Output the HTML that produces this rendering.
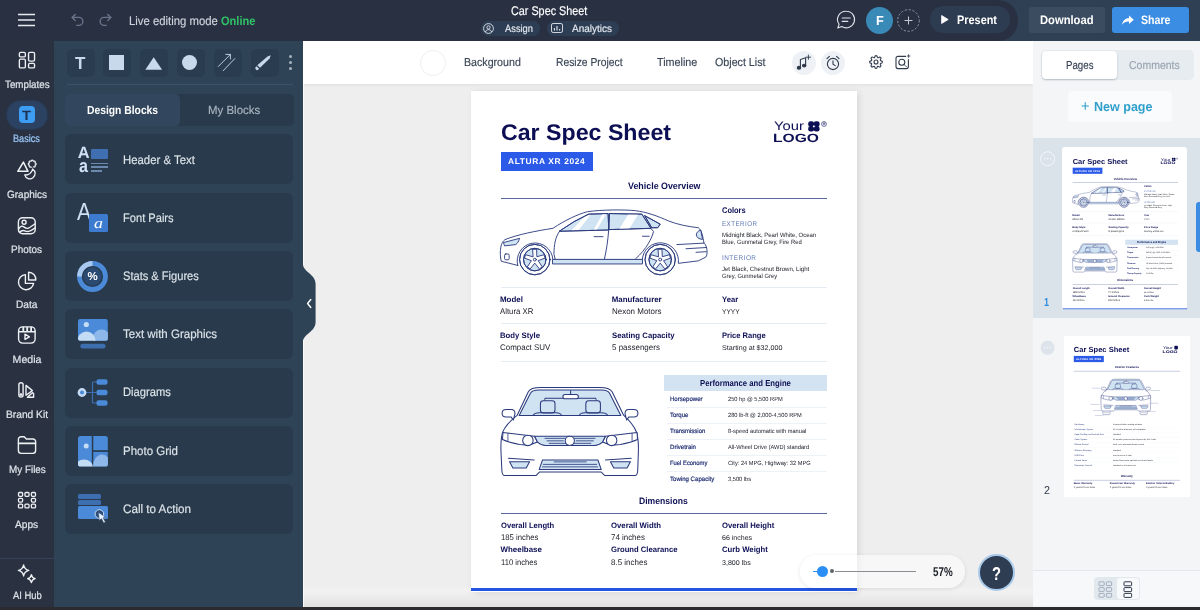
<!DOCTYPE html>
<html><head><meta charset="utf-8"><title>Car Spec Sheet</title>
<style>
*{box-sizing:border-box;margin:0;padding:0}
html,body{width:1200px;height:610px;overflow:hidden;background:#eeeeee;font-family:"Liberation Sans",sans-serif;text-rendering:geometricPrecision}
.a{position:absolute}
.t{position:absolute;white-space:nowrap;transform-origin:0 0}
svg{position:absolute;overflow:visible}
#root{position:absolute;left:0;top:0;width:1200px;height:610px;overflow:hidden;will-change:transform}
</style></head><body>
<div id="root">
<div class="a" style="left:303px;top:41px;width:730px;height:43px;background:#ffffff;box-shadow:0 1px 3px rgba(60,80,100,.10);"></div>
<div class="a" style="left:303px;top:586px;width:730px;height:21px;background:linear-gradient(to bottom,#eeeeee 0%,#f2f2f2 20%,#ececec 50%,#e0e0e0 100%)"></div>
<div class="a" style="left:303px;top:84px;width:1px;height:523px;background:#f9f9f9;"></div>
<div class="a" style="left:0px;top:0px;width:1200px;height:41px;background:#293042;"></div>
<div class="a" style="left:997px;top:0px;width:203px;height:41px;background:#2f4054;"></div>
<div class="a" style="left:977px;top:0px;width:41px;height:41px;background:#293042;border-radius:0 20px 20px 0;"></div>
<div class="a" style="left:0px;top:41px;width:54px;height:569px;background:#2a3141;"></div>
<div class="a" style="left:54px;top:41px;width:249px;height:569px;background:#2f4357;"></div>
<div class="a" style="left:1033px;top:41px;width:167px;height:569px;background:#f4f5f6;"></div>
<svg style="left:18px;top:13px" width="18" height="14"><path d="M0 1.500h17M0 7h17M0 12.500h17" stroke="#e6e9ee" stroke-width="1.600" fill="none"/></svg>
<svg style="left:71px;top:13px" width="14" height="14" viewBox="0 0 14 14" fill="none" stroke="#69748a" stroke-width="1.400" stroke-linecap="round" stroke-linejoin="round"><path d="M1.200 4.400h6.600a4 4 0 0 1 0 8h-2"/><path d="M4.200 1.400l-3 3 3 3"/></svg>
<svg style="left:98px;top:13px" width="14" height="14" viewBox="0 0 14 14" fill="none" stroke="#69748a" stroke-width="1.400" stroke-linecap="round" stroke-linejoin="round"><path d="M12.800 4.400h-6.600a4 4 0 0 0 0 8h2"/><path d="M9.800 1.400l3 3-3 3"/></svg>
<span class="t" style="left:128.60px;top:15.00px;font-size:12.3px;line-height:12.3px;color:#cfd5dd;transform:scaleX(0.9223);-webkit-text-stroke:0.160px #cfd5dd;">Live editing mode</span>
<span class="t" style="left:220.60px;top:15.00px;font-size:12.3px;line-height:12.3px;color:#2fc366;font-weight:700;transform:scaleX(0.8990);">Online</span>
<span class="t" style="left:510.70px;top:5.00px;font-size:12.6px;line-height:12.6px;color:#ffffff;transform:scaleX(0.8581);-webkit-text-stroke:0.160px #ffffff;">Car Spec Sheet</span>
<div class="a" style="left:480.5px;top:21px;width:59.5px;height:14.5px;background:#2d3e54;border-radius:7.2px;"></div>
<div class="a" style="left:547px;top:21px;width:72px;height:14.5px;background:#2d3e54;border-radius:7.2px;"></div>
<svg style="left:482.500px;top:22.500px" width="11" height="11" viewBox="0 0 11 11" fill="none" stroke="#e4e8ee" stroke-width="0.900"><circle cx="5.500" cy="5.500" r="4.900"/><circle cx="5.500" cy="4.400" r="1.600"/><path d="M2.400 9c.6-1.700 1.700-2.300 3.100-2.300s2.500.6 3.100 2.300"/></svg>
<svg style="left:551px;top:23px" width="12" height="10" viewBox="0 0 12 10" fill="none" stroke="#e4e8ee" stroke-width="0.900"><rect x="0.500" y="0.500" width="11" height="9" rx="1.600"/><path d="M3.400 7.400v-2.400M6 7.400v-4.400M8.600 7.400v-1.400" stroke-width="1.100"/></svg>
<span class="t" style="left:505.00px;top:25.00px;font-size:10.4px;line-height:10.4px;color:#e4e8ee;transform:scaleX(0.8978);-webkit-text-stroke:0.160px #e4e8ee;">Assign</span>
<span class="t" style="left:572.00px;top:25.00px;font-size:10.4px;line-height:10.4px;color:#e4e8ee;transform:scaleX(0.9620);-webkit-text-stroke:0.160px #e4e8ee;">Analytics</span>
<svg style="left:836px;top:10px" width="20" height="20" viewBox="0 0 20 20" fill="none" stroke="#dfe4ea" stroke-width="1.100" stroke-linecap="round" stroke-linejoin="round"><path d="M10.400 1.200a8.300 8.300 0 1 1-4.600 15.300l-4 1.500 1.300-3.700a8.300 8.300 0 0 1 7.300-13.100z"/><path d="M6.200 8h8M6.200 11.400h5.600"/></svg>
<div class="a" style="left:866px;top:6.5px;width:27px;height:27px;background:#3a8ab8;border-radius:13.5px;"></div>
<span class="t" style="left:875.60px;top:14.00px;font-size:13px;line-height:13px;color:#ffffff;font-weight:700;transform:scaleX(0.9807);">F</span>
<svg style="left:896.500px;top:8.500px" width="23" height="23" viewBox="0 0 23 23" fill="none" stroke="#9aa4b4" stroke-width="0.900"><circle cx="11.500" cy="11.500" r="10.800" stroke-dasharray="2.200 1.700"/><path d="M11.500 7.500v8M7.500 11.500h8" stroke="#c3cad6" stroke-width="1"/></svg>
<div class="a" style="left:929.5px;top:6.2px;width:80px;height:26.5px;background:#2d3c50;border-radius:13.2px;"></div>
<svg style="left:941px;top:14.800px" width="8" height="9" viewBox="0 0 8 9"><path d="M0.600 0.500l6.600 4-6.600 4z" fill="#fff" stroke="#fff" stroke-width="0.800" stroke-linejoin="round"/></svg>
<span class="t" style="left:957.00px;top:14.00px;font-size:12.2px;line-height:12.2px;color:#ffffff;font-weight:700;transform:scaleX(0.8945);">Present</span>
<div class="a" style="left:1028.7px;top:7px;width:76.3px;height:26px;background:#3c4c60;border-radius:3px;"></div>
<span class="t" style="left:1039.50px;top:14.00px;font-size:12.2px;line-height:12.2px;color:#ffffff;font-weight:700;transform:scaleX(0.9187);">Download</span>
<div class="a" style="left:1112px;top:7px;width:76.7px;height:26px;background:#3b8de4;border-radius:3px;"></div>
<svg style="left:1122px;top:14.500px" width="12" height="11" viewBox="0 0 12 11"><path d="M7 0.400l4.800 4.300-4.800 4.300v-2.500c-3-.2-5 .6-6.800 3.300.3-3.700 2.400-6.300 6.800-6.800z" fill="#fff"/></svg>
<span class="t" style="left:1140.50px;top:14.00px;font-size:12.2px;line-height:12.2px;color:#ffffff;font-weight:700;transform:scaleX(0.8708);">Share</span>
<svg style="left:17.700px;top:51px" width="18.200" height="18.200" viewBox="0 0 20 20" fill="none" stroke="#eef1f4" stroke-width="1.500"><rect x="1.500" y="1.500" width="6.600" height="5" rx="1.400"/><rect x="11.600" y="1.500" width="6.600" height="9.600" rx="1.400"/><rect x="1.500" y="9" width="6.600" height="9.600" rx="1.400"/><rect x="11.600" y="13.600" width="6.600" height="5" rx="1.400"/></svg>
<span class="t" style="left:4.70px;top:80.00px;font-size:10.6px;line-height:10.6px;color:#dfe5ea;transform:scaleX(0.9235);-webkit-text-stroke:0.200px #dfe5ea;">Templates</span>
<div class="a" style="left:7px;top:101px;width:40px;height:28px;border-radius:14px;background:#2b4263;box-shadow:0 0 2px 1px rgba(43,66,99,.6)"></div>
<div class="a" style="left:18.7px;top:106.1px;width:16.4px;height:17px;background:#3d9df2;border-radius:4px;"></div>
<span class="t" style="left:22.30px;top:109.00px;font-size:13.6px;line-height:13.6px;color:#1d3250;font-weight:700;transform:scaleX(1.0827);">T</span>
<span class="t" style="left:13.30px;top:134.00px;font-size:10.6px;line-height:10.6px;color:#9ccbff;transform:scaleX(0.8589);-webkit-text-stroke:0.200px #9ccbff;">Basics</span>
<svg style="left:16px;top:158px" width="22" height="22" viewBox="0 0 22 22" fill="none" stroke="#eef1f4" stroke-width="1.300" stroke-linejoin="round" stroke-linecap="round"><path d="M15.01 3.24Q16.20 1.10 17.39 3.24Q19.74 2.56 19.06 4.91Q21.20 6.10 19.06 7.29Q19.74 9.64 17.39 8.96Q16.20 11.10 15.01 8.96Q12.66 9.64 13.34 7.29Q11.20 6.10 13.34 4.91Q12.66 2.56 15.01 3.24Z"/><path d="M16.600 11A5.300 5.300 0 1 1 8.700 16.900A7 7 0 0 0 16.600 11Z" fill="#2a3141" stroke="#2a3141" stroke-width="3.600"/><path d="M16.600 11A5.300 5.300 0 1 1 8.700 16.900A7 7 0 0 0 16.600 11Z"/><path d="M7.400 4.100L1.800 13.300H12Z" fill="#2a3141" stroke="#2a3141" stroke-width="4.400"/><path d="M7.400 4.100L1.800 13.300H12Z" stroke-width="1.500"/></svg>
<span class="t" style="left:7.00px;top:190.00px;font-size:10.6px;line-height:10.6px;color:#dfe5ea;transform:scaleX(0.9436);-webkit-text-stroke:0.200px #dfe5ea;">Graphics</span>
<svg style="left:16px;top:213px" width="22" height="22" viewBox="0 0 22 22" fill="none" stroke="#eef1f4" stroke-width="1.400" stroke-linejoin="round" stroke-linecap="round"><rect x="2.400" y="4.800" width="16.800" height="16" rx="4.200"/><circle cx="8.100" cy="9.300" r="2"/><path d="M2.700 15.800c1.600-2.600 3.400-3.200 5-2s2.600 2 4.300 1.500 3.400-2 6.800-4.300"/><path d="M3.500 19.300c2-2 3.600-2.300 5.200-1.500s3 1 4.800.4 3.200-1.600 5.500-3.200"/></svg>
<span class="t" style="left:11.00px;top:245.00px;font-size:10.6px;line-height:10.6px;color:#dfe5ea;transform:scaleX(0.9398);-webkit-text-stroke:0.200px #dfe5ea;">Photos</span>
<svg style="left:16px;top:270px" width="22" height="22" viewBox="0 0 22 22" fill="none" stroke="#eef1f4" stroke-width="1.400" stroke-linejoin="round" stroke-linecap="round"><path d="M9.400 4.600a7.600 7.600 0 1 0 8.200 8.800h-8.200z"/><path d="M12.600 2.200v7.800h7.200a7.200 7.200 0 0 0-7.200-7.800z"/></svg>
<span class="t" style="left:16.00px;top:300.00px;font-size:10.6px;line-height:10.6px;color:#dfe5ea;transform:scaleX(0.9602);-webkit-text-stroke:0.200px #dfe5ea;">Data</span>
<svg style="left:16px;top:323px" width="22" height="22" viewBox="0 0 22 22" fill="none" stroke="#eef1f4" stroke-width="1.400" stroke-linejoin="round" stroke-linecap="round"><rect x="2.600" y="3.900" width="16.500" height="16.200" rx="4"/><path d="M2.800 8.800h16.100"/><path d="M7.300 4.600v3.400M11.200 4.600v3.400M15.100 4.600v3.400" stroke-width="1.800"/><path d="M9 11.200v5.200l4.400-2.600z"/></svg>
<span class="t" style="left:12.60px;top:355.00px;font-size:10.6px;line-height:10.6px;color:#dfe5ea;-webkit-text-stroke:0.200px #dfe5ea;">Media</span>
<svg style="left:16px;top:378px" width="22" height="22" viewBox="0 0 22 22" fill="none" stroke="#eef1f4" stroke-width="1.400" stroke-linejoin="round" stroke-linecap="round"><rect x="2.900" y="4.700" width="4.200" height="14.400" rx="2.100"/><circle cx="5" cy="16.600" r="0.700"/><path d="M10 7.400v9.800l6.400-4.600z"/><path d="M11.400 19.300h6.200v-3.800l-1.200-.8z"/></svg>
<span class="t" style="left:6.00px;top:410.00px;font-size:10.6px;line-height:10.6px;color:#dfe5ea;transform:scaleX(0.9638);-webkit-text-stroke:0.200px #dfe5ea;">Brand Kit</span>
<svg style="left:16px;top:434px" width="22" height="22" viewBox="0 0 22 22" fill="none" stroke="#eef1f4" stroke-width="1.400" stroke-linejoin="round" stroke-linecap="round"><path d="M2.400 7v-1.600a2.600 2.600 0 0 1 2.600-2.600h3.200l2.200 2.200h6.600a2.600 2.600 0 0 1 2.600 2.600v9a2.800 2.800 0 0 1-2.800 2.800h-11.600a2.800 2.800 0 0 1-2.800-2.800z"/><path d="M2.600 9.300h16.800" stroke-width="1.700"/></svg>
<span class="t" style="left:8.60px;top:465.00px;font-size:10.6px;line-height:10.6px;color:#dfe5ea;transform:scaleX(0.9331);-webkit-text-stroke:0.200px #dfe5ea;">My Files</span>
<svg style="left:17px;top:491px" width="20" height="18" viewBox="0 0 20 18" fill="none" stroke="#eef1f4" stroke-width="1.300"><rect x="1.5" y="1.5" width="4.100" height="3.800" rx="1"/><rect x="7.95" y="1.5" width="4.100" height="3.800" rx="1"/><rect x="14.4" y="1.5" width="4.100" height="3.800" rx="1"/><rect x="1.5" y="7.3" width="4.100" height="3.800" rx="1"/><rect x="14.4" y="7.3" width="4.100" height="3.800" rx="1"/><rect x="1.5" y="13.1" width="4.100" height="3.800" rx="1"/><rect x="7.95" y="13.1" width="4.100" height="3.800" rx="1"/><rect x="14.4" y="13.1" width="4.100" height="3.800" rx="1"/></svg>
<span class="t" style="left:15.40px;top:520.00px;font-size:10.6px;line-height:10.6px;color:#dfe5ea;transform:scaleX(0.9604);-webkit-text-stroke:0.200px #dfe5ea;">Apps</span>
<div class="a" style="left:0px;top:558px;width:54px;height:1px;background:#36425a;"></div>
<svg style="left:16px;top:563px" width="22" height="22" viewBox="0 0 22 22" fill="none" stroke="#eef1f4" stroke-width="1.300" stroke-linejoin="round"><path d="M7.600 1.800c.6 3.400 1.800 4.800 5.200 5.600-3.400.8-4.600 2.200-5.200 5.600-.6-3.400-1.800-4.800-5.200-5.600 3.400-.8 4.600-2.200 5.200-5.600z"/><path d="M15.400 11.600c.4 2.400 1.300 3.400 3.800 4-2.500.6-3.400 1.600-3.800 4-.4-2.400-1.300-3.400-3.800-4 2.500-.6 3.400-1.600 3.800-4z"/></svg>
<span class="t" style="left:12.60px;top:591.00px;font-size:10.6px;line-height:10.6px;color:#dfe5ea;transform:scaleX(0.8891);-webkit-text-stroke:0.200px #dfe5ea;">AI Hub</span>
<div class="a" style="left:66.5px;top:48.5px;width:28px;height:28px;background:#2a3d50;border-radius:5px;"></div>
<div class="a" style="left:103.4px;top:48.5px;width:28px;height:28px;background:#2a3d50;border-radius:5px;"></div>
<div class="a" style="left:140.3px;top:48.5px;width:28px;height:28px;background:#2a3d50;border-radius:5px;"></div>
<div class="a" style="left:177.2px;top:48.5px;width:28px;height:28px;background:#2a3d50;border-radius:5px;"></div>
<div class="a" style="left:214.1px;top:48.5px;width:28px;height:28px;background:#2a3d50;border-radius:5px;"></div>
<div class="a" style="left:251px;top:48.5px;width:28px;height:28px;background:#2a3d50;border-radius:5px;"></div>
<span class="t" style="left:74.80px;top:55.00px;font-size:17.5px;line-height:17.5px;color:#c9d9ec;font-weight:700;transform:scaleX(0.9717);">T</span>
<div class="a" style="left:109.2px;top:55.2px;width:15.2px;height:14.6px;background:#c9d9ec;"></div>
<svg style="left:144.800px;top:57px" width="17.400" height="13"><path d="M8.700 0.300L17.100 12.800H0.300z" fill="#c9d9ec"/></svg>
<div class="a" style="left:182.1px;top:54.8px;width:15.4px;height:15.4px;background:#c9d9ec;border-radius:8px;"></div>
<svg style="left:214px;top:49px" width="28" height="28" viewBox="0 0 28 28" fill="none" stroke="#c9d9ec" stroke-width="0.900" stroke-linecap="round" stroke-linejoin="round"><path d="M4.300 17.500L16.400 5.400M11.800 5.400h4.600v4.600M9.200 21.700L20.800 9.600"/></svg>
<svg style="left:250px;top:49px" width="28" height="28" viewBox="0 0 28 28"><path d="M7.300 16.250L17.500 7.500L20.800 6.250L19.600 9.600L10 18.750Z" fill="#c9d9ec"/><path d="M6.600 17.300l2.400 2.500-.8.900a1.750 1.750 0 0 1-2.500-2.400z" fill="#c9d9ec"/></svg>
<div class="a" style="left:289.1px;top:54.8px;width:3.4px;height:3.4px;background:#a8b2be;border-radius:2px;"></div>
<div class="a" style="left:289.1px;top:60.75px;width:3.4px;height:3.4px;background:#a8b2be;border-radius:2px;"></div>
<div class="a" style="left:289.1px;top:66.7px;width:3.4px;height:3.4px;background:#a8b2be;border-radius:2px;"></div>
<div class="a" style="left:67px;top:84px;width:225.5px;height:1px;background:#3d5268;"></div>
<div class="a" style="left:64.8px;top:93.8px;width:228.9px;height:31.8px;background:#283a4b;border-radius:5px;"></div>
<div class="a" style="left:64.8px;top:93.8px;width:114.9px;height:31.8px;background:#32475d;border-radius:5px;"></div>
<span class="t" style="left:86.50px;top:105.00px;font-size:11.8px;line-height:11.8px;color:#ffffff;font-weight:700;transform:scaleX(0.8746);">Design Blocks</span>
<span class="t" style="left:208.30px;top:105.00px;font-size:11.8px;line-height:11.8px;color:#aab5c0;transform:scaleX(0.9712);-webkit-text-stroke:0.160px #aab5c0;">My Blocks</span>
<div class="a" style="left:65px;top:134px;width:227.8px;height:50px;background:#283a4b;border-radius:6px;"></div>
<span class="t" style="left:123.00px;top:154.00px;font-size:12.3px;line-height:12.3px;color:#dde4ea;transform:scaleX(0.9240);-webkit-text-stroke:0.160px #dde4ea;">Header &amp; Text</span>
<div class="a" style="left:65px;top:192.5px;width:227.8px;height:50px;background:#283a4b;border-radius:6px;"></div>
<span class="t" style="left:123.00px;top:212.00px;font-size:12.3px;line-height:12.3px;color:#dde4ea;transform:scaleX(0.9028);-webkit-text-stroke:0.160px #dde4ea;">Font Pairs</span>
<div class="a" style="left:65px;top:251px;width:227.8px;height:50px;background:#283a4b;border-radius:6px;"></div>
<span class="t" style="left:123.00px;top:270.00px;font-size:12.3px;line-height:12.3px;color:#dde4ea;transform:scaleX(0.9017);-webkit-text-stroke:0.160px #dde4ea;">Stats &amp; Figures</span>
<div class="a" style="left:65px;top:309.3px;width:227.8px;height:50px;background:#283a4b;border-radius:6px;"></div>
<span class="t" style="left:123.00px;top:328.00px;font-size:12.3px;line-height:12.3px;color:#dde4ea;transform:scaleX(0.9356);-webkit-text-stroke:0.160px #dde4ea;">Text with Graphics</span>
<div class="a" style="left:65px;top:367.8px;width:227.8px;height:50px;background:#283a4b;border-radius:6px;"></div>
<span class="t" style="left:123.00px;top:386.00px;font-size:12.3px;line-height:12.3px;color:#dde4ea;transform:scaleX(0.9083);-webkit-text-stroke:0.160px #dde4ea;">Diagrams</span>
<div class="a" style="left:65px;top:426px;width:227.8px;height:50px;background:#283a4b;border-radius:6px;"></div>
<span class="t" style="left:123.00px;top:445.00px;font-size:12.3px;line-height:12.3px;color:#dde4ea;transform:scaleX(0.9354);-webkit-text-stroke:0.160px #dde4ea;">Photo Grid</span>
<div class="a" style="left:65px;top:484.4px;width:227.8px;height:50px;background:#283a4b;border-radius:6px;"></div>
<span class="t" style="left:123.00px;top:503.00px;font-size:12.3px;line-height:12.3px;color:#dde4ea;transform:scaleX(0.9473);-webkit-text-stroke:0.160px #dde4ea;">Call to Action</span>
<span class="t" style="left:77.70px;top:145.00px;font-size:16.4px;line-height:16.4px;color:#cfe0f5;font-weight:700;">A</span>
<span class="t" style="left:78.60px;top:157.00px;font-size:18.5px;line-height:18.5px;color:#cfe0f5;font-weight:700;transform:scaleX(0.8741);">a</span>
<div class="a" style="left:91px;top:149px;width:16.6px;height:10px;background:#3f6fb0;border-radius:1px;"></div>
<div class="a" style="left:91px;top:162.8px;width:16.6px;height:1.5px;background:#6b88ad;"></div>
<div class="a" style="left:91px;top:166.4px;width:16.6px;height:1.5px;background:#6b88ad;"></div>
<div class="a" style="left:91px;top:170px;width:11.3px;height:1.5px;background:#6b88ad;"></div>
<span class="t" style="left:77.30px;top:201.00px;font-size:24.6px;line-height:24.6px;color:#cfe0f5;transform:scaleX(0.8655);">A</span>
<div class="a" style="left:89px;top:214.2px;width:18.6px;height:18.2px;background:#3d7bd0;border-radius:1.5px;"></div>
<span class="t" style="left:93.50px;top:217.00px;font-size:15px;line-height:15px;color:#ffffff;transform:scaleX(1.1985);font-family:'Liberation Serif',serif;font-style:italic;">a</span>
<svg style="left:77px;top:260.500px" width="31" height="31" viewBox="-15.500 -15.500 31 31"><circle r="13" fill="none" stroke="#4a8ad8" stroke-width="4.800"/><path d="M-13 0A13 13 0 0 1 0 -13" fill="none" stroke="#a8c8f0" stroke-width="4.800"/><circle r="9.300" fill="#2b4a72"/></svg>
<span class="t" style="left:87.40px;top:272.00px;font-size:11.5px;line-height:11.5px;color:#ffffff;font-weight:700;">%</span>
<svg style="left:77.700px;top:319.200px" width="30" height="30" viewBox="0 0 30 30"><defs><clipPath id="c4"><rect width="29.900" height="21.700" rx="2.200"/></clipPath></defs><g clip-path="url(#c4)"><rect width="29.900" height="21.700" fill="#4a8ad8"/><circle cx="23.500" cy="19" r="8.500" fill="#8fb8ea"/><circle cx="8.500" cy="21.500" r="9" fill="#c5dcf5"/><circle cx="8.300" cy="5.500" r="2.600" fill="#c5dcf5"/></g><rect x="2.300" y="24.800" width="25.300" height="4.800" rx="2.400" fill="#3d6eb0"/></svg>
<svg style="left:77px;top:378px" width="32" height="30" viewBox="0 0 32 30"><path d="M5 14.500h14.400M15.500 4h4M15.500 25h4M15.500 4v21" stroke="#3d6eb0" stroke-width="1.200" fill="none"/><rect x="19.400" y="1.200" width="11.200" height="5.600" rx="2.200" fill="#4a8ad8"/><rect x="19.400" y="11.700" width="11.200" height="5.600" rx="2.200" fill="#4a8ad8"/><rect x="19.400" y="22.200" width="11.200" height="5.600" rx="2.200" fill="#4a8ad8"/><circle cx="5" cy="14.500" r="4.400" fill="#c5dcf5"/><circle cx="5" cy="14.500" r="2" fill="#4a8ad8"/></svg>
<svg style="left:77.700px;top:435.800px" width="30" height="31" viewBox="0 0 30 31"><defs><clipPath id="c6"><rect width="29.900" height="30.500" rx="2.600"/></clipPath></defs><g clip-path="url(#c6)"><rect width="13.800" height="30.500" fill="#4a8ad8"/><rect x="15.300" width="14.600" height="14.200" fill="#4a8ad8"/><rect x="15.300" y="15.900" width="14.600" height="14.600" fill="#4a8ad8"/><ellipse cx="6" cy="31" rx="9" ry="7.500" fill="#c5dcf5"/><circle cx="8.200" cy="10" r="2.500" fill="#c5dcf5"/><ellipse cx="24" cy="30.500" rx="9" ry="12" fill="#8fb8ea"/></g></svg>
<div class="a" style="left:77.7px;top:494px;width:23.6px;height:4.5px;background:#3d6eb0;border-radius:1.5px;"></div>
<div class="a" style="left:77.7px;top:500.2px;width:23.6px;height:4.4px;background:#3d6eb0;border-radius:1.5px;"></div>
<div class="a" style="left:77.7px;top:506px;width:29.9px;height:12.7px;background:#4a8ad8;border-radius:1.5px;"></div>
<svg style="left:92px;top:507px" width="18" height="18" viewBox="0 0 18 18"><circle cx="7.400" cy="7" r="4.300" fill="#2e4c78" stroke="#c5dcf5" stroke-width="1"/><path d="M6.400 5.400l1 8.200 2-2 2.400 4.400 1.600-.9-2.400-4.300 2.700-.5z" fill="#eaf2fb" stroke="#2e4c78" stroke-width="0.500"/></svg>
<svg style="left:303px;top:264px" width="14" height="78" viewBox="0 0 14 78"><path d="M0 0c0 8 12.600 10 12.600 20v38c0 10-12.600 12-12.600 20z" fill="#2f4357"/><path d="M7.800 35.500l-3.200 4 3.200 4" fill="none" stroke="#fff" stroke-width="1.400" stroke-linecap="round" stroke-linejoin="round"/></svg>
<div class="a" style="left:420px;top:49.500px;width:26px;height:26px;border-radius:13px;border:1px solid #eceff3;background:#fff"></div>
<span class="t" style="left:463.70px;top:57.00px;font-size:11.6px;line-height:11.6px;color:#3a4556;transform:scaleX(0.9180);-webkit-text-stroke:0.160px #3a4556;">Background</span>
<span class="t" style="left:555.50px;top:57.00px;font-size:11.6px;line-height:11.6px;color:#3a4556;transform:scaleX(0.8896);-webkit-text-stroke:0.160px #3a4556;">Resize Project</span>
<span class="t" style="left:656.70px;top:57.00px;font-size:11.6px;line-height:11.6px;color:#3a4556;transform:scaleX(0.9288);-webkit-text-stroke:0.160px #3a4556;">Timeline</span>
<span class="t" style="left:714.50px;top:57.00px;font-size:11.6px;line-height:11.6px;color:#3a4556;transform:scaleX(0.9218);-webkit-text-stroke:0.160px #3a4556;">Object List</span>
<div class="a" style="left:791.7px;top:50.5px;width:24px;height:24px;background:#eef1f5;border-radius:12px;"></div>
<div class="a" style="left:820.5px;top:50.5px;width:24px;height:24px;background:#eef1f5;border-radius:12px;"></div>
<svg style="left:796px;top:54px" width="16" height="17" viewBox="0 0 16 17" fill="none" stroke="#2f3a4b" stroke-width="1.100" stroke-linecap="round"><path d="M4.400 13.600v-8l5.200-1.800v7.600"/><ellipse cx="3" cy="13.800" rx="1.700" ry="1.400" fill="#2f3a4b"/><ellipse cx="8.200" cy="11.600" rx="1.700" ry="1.400" fill="#2f3a4b"/><path d="M12.400 1v4.400M10.200 3.200h4.400" stroke-width="0.900"/></svg>
<svg style="left:824.500px;top:54.500px" width="16" height="16" viewBox="0 0 16 16" fill="none" stroke="#2f3a4b" stroke-width="1.100" stroke-linecap="round"><circle cx="8" cy="9" r="5.600"/><path d="M8 5.800v3.400l2.200 1.400M2 3.600l2.400-2.200M14 3.600l-2.400-2.200"/></svg>
<svg style="left:868.500px;top:55px" width="14" height="14" viewBox="0 0 24 24" fill="none" stroke="#2f3a4b" stroke-width="1.900" stroke-linejoin="round"><circle cx="12" cy="12" r="3.400"/><path d="M19.400 15a1.700 1.700 0 0 0 .3 1.800l.1.100a2 2 0 1 1-2.900 2.900l-.1-.1a1.700 1.700 0 0 0-1.800-.3 1.700 1.700 0 0 0-1 1.500V21a2 2 0 1 1-4 0v-.1a1.700 1.700 0 0 0-1.100-1.500 1.700 1.700 0 0 0-1.800.3l-.1.100a2 2 0 1 1-2.900-2.900l.1-.1a1.700 1.700 0 0 0 .3-1.800 1.700 1.700 0 0 0-1.500-1H3a2 2 0 1 1 0-4h.1a1.700 1.700 0 0 0 1.500-1.100 1.700 1.700 0 0 0-.3-1.800l-.1-.1a2 2 0 1 1 2.900-2.900l.1.100a1.700 1.700 0 0 0 1.800.3h.1a1.700 1.700 0 0 0 1-1.500V3a2 2 0 1 1 4 0v.1a1.700 1.700 0 0 0 1 1.500 1.700 1.700 0 0 0 1.800-.3l.1-.1a2 2 0 1 1 2.900 2.900l-.1.100a1.700 1.700 0 0 0-.3 1.800v.1a1.700 1.700 0 0 0 1.500 1H21a2 2 0 1 1 0 4h-.1a1.700 1.700 0 0 0-1.500 1z"/></svg>
<svg style="left:894.500px;top:54px" width="16" height="16" viewBox="0 0 16 16" fill="none" stroke="#2f3a4b" stroke-width="1.100" stroke-linecap="round"><path d="M10.600 2.400H3a2 2 0 0 0-2 2v8.200a2 2 0 0 0 2 2h8.400a2 2 0 0 0 2-2V5.600"/><circle cx="6.800" cy="8.200" r="3"/><path d="M9 10.400l2.600 2.600M13.600 0.600v2.800M12.200 2h2.800" stroke-width="0.800"/></svg>
<div class="a" style="left:1041px;top:50px;width:152.7px;height:30px;background:#e6ecf0;border-radius:5px;"></div>
<div class="a" style="left:1041.700px;top:50.700px;width:75.300px;height:28.500px;border-radius:4px;background:#fff;box-shadow:0 1px 2px rgba(120,130,145,.45)"></div>
<span class="t" style="left:1065.50px;top:61.00px;font-size:11.5px;line-height:11.5px;color:#3a4556;transform:scaleX(0.8433);-webkit-text-stroke:0.160px #3a4556;">Pages</span>
<span class="t" style="left:1128.70px;top:61.00px;font-size:11.5px;line-height:11.5px;color:#9ba5b0;transform:scaleX(0.9135);-webkit-text-stroke:0.160px #9ba5b0;">Comments</span>
<div class="a" style="left:1067.5px;top:91px;width:104px;height:31.3px;background:#fafbfc;border-radius:4px;"></div>
<span class="t" style="left:1081.00px;top:99.00px;font-size:15px;line-height:15px;color:#2f9fcb;transform:scaleX(0.9697);">+</span>
<span class="t" style="left:1093.50px;top:100.00px;font-size:13px;line-height:13px;color:#2f9fcb;font-weight:700;transform:scaleX(0.9640);">New page</span>
<div class="a" style="left:1033.4px;top:137.7px;width:166.6px;height:180.6px;background:#dbe3ea;"></div>
<div class="a" style="left:1196px;top:202px;width:4px;height:50px;background:#3b8de4;border-radius:3px 0 0 3px;"></div>
<svg style="left:1040px;top:151px" width="16" height="16" viewBox="0 0 16 16"><circle cx="7.600" cy="7.700" r="7" fill="none" stroke="#f4f7fa" stroke-width="1"/><circle cx="4.600" cy="7.700" r="0.800" fill="#f4f7fa"/><circle cx="7.600" cy="7.700" r="0.800" fill="#f4f7fa"/><circle cx="10.600" cy="7.700" r="0.800" fill="#f4f7fa"/></svg>
<svg style="left:1040px;top:340px" width="16" height="16" viewBox="0 0 16 16"><circle cx="7.600" cy="7.700" r="7" fill="#dde3ea"/><circle cx="4.600" cy="7.700" r="0.800" fill="#f4f7fa"/><circle cx="7.600" cy="7.700" r="0.800" fill="#f4f7fa"/><circle cx="10.600" cy="7.700" r="0.800" fill="#f4f7fa"/></svg>
<div class="a" style="left:1062.3px;top:147.2px;width:124.6px;height:161.5px;background:#ffffff;border-radius:3px;"></div>
<div class="a" style="left:1063.6px;top:335.7px;width:126px;height:161.3px;background:#ffffff;"></div>
<span class="t" style="left:1043.50px;top:298.00px;font-size:11.5px;line-height:11.5px;color:#2f8be0;font-weight:700;transform:scaleX(0.7805);">1</span>
<span class="t" style="left:1043.50px;top:486.00px;font-size:11.5px;line-height:11.5px;color:#333b4a;transform:scaleX(0.9366);">2</span>
<div class="a" style="left:1033.4px;top:570px;width:166.6px;height:35px;background:#f7f8f9;border-top:1px solid #dfe7ef;"></div>
<div class="a" style="left:1094px;top:577px;width:46px;height:23px;background:#e1e8ee;border-radius:4px;"></div>
<div class="a" style="left:1117px;top:578px;width:22px;height:21px;background:#f7f9fb;border-radius:3px;"></div>
<svg style="left:1098px;top:580.500px" width="15" height="17" viewBox="0 0 15 17" fill="none" stroke="#9aa8b8" stroke-width="0.900"><rect x="1" y="0.8" width="5.200" height="3.800" rx="0.600"/><rect x="8.4" y="0.8" width="5.200" height="3.800" rx="0.600"/><rect x="1" y="6.6" width="5.200" height="3.800" rx="0.600"/><rect x="8.4" y="6.6" width="5.200" height="3.800" rx="0.600"/><rect x="1" y="12.4" width="5.200" height="3.800" rx="0.600"/><rect x="8.4" y="12.4" width="5.200" height="3.800" rx="0.600"/></svg>
<svg style="left:1123px;top:580.500px" width="10" height="17" viewBox="0 0 10 17" fill="none" stroke="#2f3a4b" stroke-width="1"><rect x="1" y="0.8" width="7.600" height="4" rx="0.700"/><rect x="1" y="6.6" width="7.600" height="4" rx="0.700"/><rect x="1" y="12.4" width="7.600" height="4" rx="0.700"/></svg>
<div class="a" style="left:471px;top:91px;width:386.300px;height:500.500px;background:#fff;text-rendering:geometricPrecision;box-shadow:1.500px 1px 7px rgba(0,0,0,.11);"><span class="t" style="left:29.70px;top:30.00px;font-size:22.7px;line-height:22.7px;color:#0d0f55;font-weight:700;transform:scaleX(1.0213);">Car Spec Sheet</span>
<div class="a" style="left:29.5px;top:60.5px;width:92.5px;height:19.2px;background:#2b5ae8;"></div>
<span class="t" style="left:37.20px;top:66.00px;font-size:8.3px;line-height:8.3px;color:#ffffff;font-weight:700;letter-spacing:0.6px;transform:scaleX(1.0160);">ALTURA XR 2024</span>
<span class="t" style="left:302.80px;top:29.00px;font-size:12.4px;line-height:12.4px;color:#0d0f55;transform:scaleX(1.1898);">Your</span>
<span class="t" style="left:302.30px;top:41.00px;font-size:12px;line-height:12px;color:#0d0f55;font-weight:700;transform:scaleX(1.3015);">LOGO</span>
<svg style="left:337.2px;top:30px" width="12" height="11" viewBox="0 0 12 11"><g fill="#0d0f55"><rect x="0.200" y="0.200" width="5.900" height="5.500" rx="2.300"/><rect x="5.700" y="0.200" width="5.900" height="5.500" rx="2.300"/><rect x="0.200" y="5.100" width="5.900" height="5.500" rx="2.300"/><rect x="5.700" y="5.100" width="5.900" height="5.500" rx="2.300"/></g><rect x="5.100" y="4.600" width="1.600" height="1.600" rx="0.400" fill="#fff"/></svg>
<svg style="left:350px;top:29.6px" width="6" height="6" viewBox="0 0 6 6"><circle cx="3" cy="3" r="2.400" fill="none" stroke="#0d0f55" stroke-width="0.600"/></svg>
<span class="t" style="left:351.80px;top:32.00px;font-size:3.4px;line-height:3.4px;color:#0d0f55;font-weight:700;transform:scaleX(0.9783);">R</span>
<span class="t" style="left:156.50px;top:91.00px;font-size:9.3px;line-height:9.3px;color:#0d0f55;font-weight:700;transform:scaleX(0.9541);">Vehicle Overview</span>
<div class="a" style="left:29.5px;top:106.9px;width:326.5px;height:0.9px;background:#5c69a3;"></div>
<span class="t" style="left:251.30px;top:115.00px;font-size:8.3px;line-height:8.3px;color:#0d0f55;font-weight:700;transform:scaleX(0.9018);">Colors</span>
<span class="t" style="left:251.30px;top:131.00px;font-size:6.8px;line-height:6.8px;color:#5f79b5;letter-spacing:0.5px;transform:scaleX(0.9176);">EXTERIOR</span>
<span class="t" style="left:251.30px;top:142.00px;font-size:6.2px;line-height:6.2px;color:#20222b;transform:scaleX(0.9679);">Midnight Black, Pearl White, Ocean</span>
<span class="t" style="left:251.30px;top:149.00px;font-size:6.2px;line-height:6.2px;color:#20222b;transform:scaleX(0.9434);">Blue, Gunmetal Grey, Fire Red</span>
<span class="t" style="left:251.30px;top:165.00px;font-size:6.8px;line-height:6.8px;color:#5f79b5;letter-spacing:0.5px;transform:scaleX(0.9449);">INTERIOR</span>
<span class="t" style="left:251.30px;top:176.00px;font-size:6.2px;line-height:6.2px;color:#20222b;transform:scaleX(0.9752);">Jet Black, Chestnut Brown, Light</span>
<span class="t" style="left:251.30px;top:183.00px;font-size:6.2px;line-height:6.2px;color:#20222b;transform:scaleX(0.9461);">Grey, Gunmetal Grey</span>
<div class="a" style="left:29.5px;top:196px;width:326.5px;height:0.9px;background:#e1ecf6;"></div>
<div class="a" style="left:29.5px;top:232.2px;width:326.5px;height:0.9px;background:#e1ecf6;"></div>
<div class="a" style="left:29.5px;top:269.6px;width:326.5px;height:0.9px;background:#e1ecf6;"></div>
<span class="t" style="left:29.40px;top:205.00px;font-size:7.9px;line-height:7.9px;color:#0d0f55;font-weight:700;transform:scaleX(1.0045);">Model</span>
<span class="t" style="left:29.40px;top:217.00px;font-size:8.2px;line-height:8.2px;color:#20222b;transform:scaleX(0.9502);">Altura XR</span>
<span class="t" style="left:140.70px;top:205.00px;font-size:7.9px;line-height:7.9px;color:#0d0f55;font-weight:700;">Manufacturer</span>
<span class="t" style="left:140.70px;top:217.00px;font-size:8.2px;line-height:8.2px;color:#20222b;transform:scaleX(0.9731);">Nexon Motors</span>
<span class="t" style="left:251.30px;top:205.00px;font-size:7.9px;line-height:7.9px;color:#0d0f55;font-weight:700;transform:scaleX(0.9708);">Year</span>
<span class="t" style="left:251.30px;top:219.00px;font-size:6.8px;line-height:6.8px;color:#20222b;transform:scaleX(0.9702);">YYYY</span>
<span class="t" style="left:29.40px;top:241.00px;font-size:7.9px;line-height:7.9px;color:#0d0f55;font-weight:700;transform:scaleX(0.9808);">Body Style</span>
<span class="t" style="left:29.40px;top:253.00px;font-size:8.2px;line-height:8.2px;color:#20222b;transform:scaleX(0.9716);">Compact SUV</span>
<span class="t" style="left:140.70px;top:241.00px;font-size:7.9px;line-height:7.9px;color:#0d0f55;font-weight:700;transform:scaleX(0.9859);">Seating Capacity</span>
<span class="t" style="left:140.70px;top:253.00px;font-size:8.2px;line-height:8.2px;color:#20222b;transform:scaleX(0.9741);">5 passengers</span>
<span class="t" style="left:251.30px;top:241.00px;font-size:7.9px;line-height:7.9px;color:#0d0f55;font-weight:700;transform:scaleX(0.9578);">Price Range</span>
<span class="t" style="left:251.30px;top:255.00px;font-size:6.9px;line-height:6.9px;color:#20222b;transform:scaleX(1.0389);">Starting at $32,000</span>
<div class="a" style="left:192.8px;top:284.3px;width:163.2px;height:15.3px;background:#d3e3f1;"></div>
<span class="t" style="left:228.80px;top:288.00px;font-size:8.7px;line-height:8.7px;color:#0d0f55;font-weight:700;transform:scaleX(0.8880);">Performance and Engine</span>
<span class="t" style="left:198.70px;top:306.00px;font-size:6.3px;line-height:6.3px;color:#1a2870;transform:scaleX(0.9572);-webkit-text-stroke:0.180px #1a2870;">Horsepower</span>
<span class="t" style="left:256.70px;top:306.00px;font-size:6px;line-height:6px;color:#20222b;transform:scaleX(0.9464);">250 hp @ 5,500 RPM</span>
<div class="a" style="left:196px;top:315.9px;width:160px;height:0.8px;background:#edf2f7;"></div>
<span class="t" style="left:198.70px;top:322.00px;font-size:6.3px;line-height:6.3px;color:#1a2870;transform:scaleX(0.9499);-webkit-text-stroke:0.180px #1a2870;">Torque</span>
<span class="t" style="left:256.70px;top:322.00px;font-size:6px;line-height:6px;color:#20222b;transform:scaleX(0.9445);">280 lb-ft @ 2,000-4,500 RPM</span>
<div class="a" style="left:196px;top:331.8px;width:160px;height:0.8px;background:#edf2f7;"></div>
<span class="t" style="left:198.70px;top:338.00px;font-size:6.3px;line-height:6.3px;color:#1a2870;transform:scaleX(0.9484);-webkit-text-stroke:0.180px #1a2870;">Transmission</span>
<span class="t" style="left:256.70px;top:338.00px;font-size:6px;line-height:6px;color:#20222b;transform:scaleX(0.9428);">8-speed automatic with manual</span>
<div class="a" style="left:196px;top:347.7px;width:160px;height:0.8px;background:#edf2f7;"></div>
<span class="t" style="left:198.70px;top:354.00px;font-size:6.3px;line-height:6.3px;color:#1a2870;transform:scaleX(0.9646);-webkit-text-stroke:0.180px #1a2870;">Drivetrain</span>
<span class="t" style="left:256.70px;top:354.00px;font-size:6px;line-height:6px;color:#20222b;transform:scaleX(0.9453);">All-Wheel Drive (AWD) standard</span>
<div class="a" style="left:196px;top:363.6px;width:160px;height:0.8px;background:#edf2f7;"></div>
<span class="t" style="left:198.70px;top:370.00px;font-size:6.3px;line-height:6.3px;color:#1a2870;transform:scaleX(0.9292);-webkit-text-stroke:0.180px #1a2870;">Fuel Economy</span>
<span class="t" style="left:256.70px;top:370.00px;font-size:6px;line-height:6px;color:#20222b;transform:scaleX(0.9454);">City: 24 MPG, Highway: 32 MPG</span>
<div class="a" style="left:196px;top:379.5px;width:160px;height:0.8px;background:#edf2f7;"></div>
<span class="t" style="left:198.70px;top:386.00px;font-size:6.3px;line-height:6.3px;color:#1a2870;transform:scaleX(0.9660);-webkit-text-stroke:0.180px #1a2870;">Towing Capacity</span>
<span class="t" style="left:256.70px;top:386.00px;font-size:6px;line-height:6px;color:#20222b;transform:scaleX(0.9483);">3,500 lbs</span>
<span class="t" style="left:168.30px;top:406.00px;font-size:9.3px;line-height:9.3px;color:#0d0f55;font-weight:700;transform:scaleX(0.9240);">Dimensions</span>
<div class="a" style="left:29.5px;top:421.8px;width:326.5px;height:0.9px;background:#5c69a3;"></div>
<span class="t" style="left:29.60px;top:431.00px;font-size:7.9px;line-height:7.9px;color:#0d0f55;font-weight:700;transform:scaleX(0.9629);">Overall Length</span>
<span class="t" style="left:29.60px;top:443.00px;font-size:8.2px;line-height:8.2px;color:#20222b;transform:scaleX(0.9442);">185 inches</span>
<span class="t" style="left:29.60px;top:455.00px;font-size:7.9px;line-height:7.9px;color:#0d0f55;font-weight:700;">Wheelbase</span>
<span class="t" style="left:29.60px;top:468.00px;font-size:8.2px;line-height:8.2px;color:#20222b;transform:scaleX(0.9333);">110 inches</span>
<span class="t" style="left:140.40px;top:431.00px;font-size:7.9px;line-height:7.9px;color:#0d0f55;font-weight:700;transform:scaleX(0.9843);">Overall Width</span>
<span class="t" style="left:140.40px;top:443.00px;font-size:8.2px;line-height:8.2px;color:#20222b;transform:scaleX(0.9668);">74 inches</span>
<span class="t" style="left:140.40px;top:455.00px;font-size:7.9px;line-height:7.9px;color:#0d0f55;font-weight:700;transform:scaleX(0.9721);">Ground Clearance</span>
<span class="t" style="left:140.40px;top:468.00px;font-size:8.2px;line-height:8.2px;color:#20222b;transform:scaleX(0.9751);">8.5 inches</span>
<span class="t" style="left:251.20px;top:431.00px;font-size:7.9px;line-height:7.9px;color:#0d0f55;font-weight:700;transform:scaleX(0.9776);">Overall Height</span>
<span class="t" style="left:251.20px;top:445.00px;font-size:6.9px;line-height:6.9px;color:#20222b;transform:scaleX(1.0203);">66 inches</span>
<span class="t" style="left:251.20px;top:455.00px;font-size:7.9px;line-height:7.9px;color:#0d0f55;font-weight:700;transform:scaleX(0.9794);">Curb Weight</span>
<span class="t" style="left:251.20px;top:470.00px;font-size:6.9px;line-height:6.9px;color:#20222b;transform:scaleX(1.0297);">3,800 lbs</span>
<div class="a" style="left:0.2px;top:496.7px;width:386px;height:3.8px;background:#2454e0;"></div>
<svg style="left:9px;top:104px" width="250" height="100" viewBox="0 0 1200 480" fill="none" stroke="#2b3a7d" stroke-width="4.400" stroke-linejoin="round" stroke-linecap="round"><path d="M181 338L102 318C97 300 96 270 100 250C103 232 110 222 120 214C180 190 270 172 350 160C410 120 470 92 516 80C590 70 690 70 745 75C800 82 850 100 906 125C950 142 1000 152 1048 157C1064 168 1070 200 1075 231C1092 245 1094 285 1084 298L1048 316L952 328A87 87 0 1 0 779 310L350 310A86 86 0 1 0 181 338Z" fill="#fff"/><path d="M382 173Q450 124 521 92L615 89L618 166Z" fill="#cfe3f3"/><path d="M623 89L777 92L821 160L620 166Z" fill="#cfe3f3"/><path d="M792 100L865 140L853 157L826 157Z" fill="#cfe3f3"/><g stroke="none" fill="#fff"><path d="M500 106L532 94L474 168L440 169Z"/><path d="M588 91L606 90L560 167L546 167Z"/><path d="M712 92L760 92L716 163L668 164Z"/></g><path d="M382 173Q450 124 521 92L615 89L618 166Z"/><path d="M623 89L777 92L821 160L620 166Z"/><path d="M792 100L865 140L853 157L826 157Z"/><path d="M382 174C362 200 355 240 355 285L361 308"/><path d="M618 166C614 220 606 270 597 308"/><path d="M821 162L833 175C826 205 800 260 747 306"/><path d="M548 200h42M780 198h32"/><rect x="350" y="309" width="430" height="22" fill="#cfe3f3"/><path d="M114 228L190 208C186 222 180 232 172 238L120 244Z" fill="#cfe3f3"/><rect x="118" y="283" width="22" height="28" rx="6"/><path d="M1058 169C1030 176 1030 210 1066 213Z" fill="#cfe3f3"/><path d="M945 238L1075 231M989 258L1087 252M1037 275L1086 272"/><circle cx="263" cy="310" r="73" fill="#fff"/><circle cx="263" cy="310" r="54" fill="#cfe3f3"/><polygon points="254.5,260.7 271.5,260.7 273.0,296.2 307.3,286.7 312.5,302.8 279.2,315.3 298.8,344.9 285.1,354.8 263.0,327.0 240.9,354.8 227.2,344.9 246.8,315.3 213.5,302.8 218.7,286.7 253.0,296.2" fill="#fff"/><circle cx="263" cy="310" r="73"/><circle cx="263" cy="310" r="54"/><circle cx="263" cy="310" r="7" fill="#fff"/><circle cx="865" cy="310" r="73" fill="#fff"/><circle cx="865" cy="310" r="54" fill="#cfe3f3"/><polygon points="856.5,260.7 873.5,260.7 875.0,296.2 909.3,286.7 914.5,302.8 881.2,315.3 900.8,344.9 887.1,354.8 865.0,327.0 842.9,354.8 829.2,344.9 848.8,315.3 815.5,302.8 820.7,286.7 855.0,296.2" fill="#fff"/><circle cx="865" cy="310" r="73"/><circle cx="865" cy="310" r="54"/><circle cx="865" cy="310" r="7" fill="#fff"/></svg>
<svg style="left:9px;top:279px" width="250" height="120" viewBox="0 0 1200 576" fill="none" stroke="#2b3a7d" stroke-width="5" stroke-linejoin="round" stroke-linecap="round"><path d="M178 218L232 104C240 90 262 84 290 84H575C605 84 625 90 634 104L690 218C715 240 740 270 752 300C760 330 762 360 760 400L757 482C756 498 752 506 744 506H598L582 490H285L270 506H118C110 506 106 498 105 482L101 400C99 360 100 330 108 300C120 270 150 240 178 218Z" fill="#fff"/><path d="M188 218L242 112C248 100 262 96 282 96H584C604 96 616 100 622 112L676 218Z" fill="#cfe3f3"/><path d="M312 136H556"/><path d="M314 136L300 160M554 136L568 160" stroke-width="4"/><rect x="290" y="148" width="70" height="58" rx="14" fill="#cfe3f3"/><rect x="508" y="148" width="70" height="58" rx="14" fill="#cfe3f3"/><path d="M254 218C260 208 270 205 285 205H365C380 205 388 210 392 218M476 218C480 210 488 205 503 205H583C598 205 608 208 614 218"/><path d="M435 100v18"/><rect x="398" y="118" width="74" height="20" rx="10" fill="#fff"/><path d="M160 240L150 226H125C112 226 106 218 106 208C106 196 114 190 126 190H150C162 190 168 198 168 210Z" fill="#fff"/><path d="M704 240L714 226H739C752 226 758 218 758 208C758 196 750 190 738 190H714C702 190 696 198 696 210Z" fill="#fff"/><path d="M110 300C160 306 210 312 262 318L276 346C250 360 215 362 190 358C160 352 130 344 108 334Z" fill="#fff"/><path d="M754 300C704 306 654 312 602 318L588 346C614 360 649 362 674 358C704 352 734 344 756 334Z" fill="#fff"/><path d="M134 304V338" stroke-width="4"/><path d="M730 304V338" stroke-width="4"/><path d="M262 318H602L588 346C575 358 565 362 550 362H314C299 362 289 358 276 346Z" fill="#cfe3f3"/><path d="M312 328H552M322 340H400M462 340H544M332 352H532" stroke-width="4"/><circle cx="230" cy="338" r="25" fill="#fff"/><circle cx="632" cy="338" r="25" fill="#fff"/><circle cx="431" cy="340" r="22" fill="#fff"/><path d="M136 424L260 432M726 424L602 432"/><path d="M142 440H238L222 470H158Z" fill="#cfe3f3"/><path d="M722 440H626L642 470H706Z" fill="#cfe3f3"/><path d="M300 432H566L582 478H284Z" fill="#cfe3f3"/><path d="M356 441H510M304 453H560M300 465H564" stroke-width="4"/></svg></div>
<div class="a" style="left:1062.700px;top:147.500px;width:385px;height:499.500px;transform-origin:0 0;transform:scale(0.3228);overflow:hidden;text-rendering:geometricPrecision"><span class="t" style="left:29.70px;top:30.00px;font-size:22.7px;line-height:22.7px;color:#0d0f55;font-weight:700;transform:scaleX(1.0213);">Car Spec Sheet</span>
<div class="a" style="left:29.5px;top:60.5px;width:92.5px;height:19.2px;background:#2b5ae8;"></div>
<span class="t" style="left:37.20px;top:66.00px;font-size:8.3px;line-height:8.3px;color:#ffffff;font-weight:700;letter-spacing:0.6px;transform:scaleX(1.0160);">ALTURA XR 2024</span>
<span class="t" style="left:302.80px;top:29.00px;font-size:12.4px;line-height:12.4px;color:#0d0f55;transform:scaleX(1.1898);">Your</span>
<span class="t" style="left:302.30px;top:41.00px;font-size:12px;line-height:12px;color:#0d0f55;font-weight:700;transform:scaleX(1.3015);">LOGO</span>
<svg style="left:337.2px;top:30px" width="12" height="11" viewBox="0 0 12 11"><g fill="#0d0f55"><rect x="0.200" y="0.200" width="5.900" height="5.500" rx="2.300"/><rect x="5.700" y="0.200" width="5.900" height="5.500" rx="2.300"/><rect x="0.200" y="5.100" width="5.900" height="5.500" rx="2.300"/><rect x="5.700" y="5.100" width="5.900" height="5.500" rx="2.300"/></g><rect x="5.100" y="4.600" width="1.600" height="1.600" rx="0.400" fill="#fff"/></svg>
<svg style="left:350px;top:29.6px" width="6" height="6" viewBox="0 0 6 6"><circle cx="3" cy="3" r="2.400" fill="none" stroke="#0d0f55" stroke-width="0.600"/></svg>
<span class="t" style="left:351.80px;top:32.00px;font-size:3.4px;line-height:3.4px;color:#0d0f55;font-weight:700;transform:scaleX(0.9783);">R</span>
<span class="t" style="left:156.50px;top:91.00px;font-size:9.3px;line-height:9.3px;color:#0d0f55;font-weight:700;transform:scaleX(0.9541);">Vehicle Overview</span>
<div class="a" style="left:29.5px;top:106.9px;width:326.5px;height:0.9px;background:#5c69a3;"></div>
<span class="t" style="left:251.30px;top:115.00px;font-size:8.3px;line-height:8.3px;color:#0d0f55;font-weight:700;transform:scaleX(0.9018);">Colors</span>
<span class="t" style="left:251.30px;top:131.00px;font-size:6.8px;line-height:6.8px;color:#5f79b5;letter-spacing:0.5px;transform:scaleX(0.9176);">EXTERIOR</span>
<span class="t" style="left:251.30px;top:142.00px;font-size:6.2px;line-height:6.2px;color:#20222b;transform:scaleX(0.9679);">Midnight Black, Pearl White, Ocean</span>
<span class="t" style="left:251.30px;top:149.00px;font-size:6.2px;line-height:6.2px;color:#20222b;transform:scaleX(0.9434);">Blue, Gunmetal Grey, Fire Red</span>
<span class="t" style="left:251.30px;top:165.00px;font-size:6.8px;line-height:6.8px;color:#5f79b5;letter-spacing:0.5px;transform:scaleX(0.9449);">INTERIOR</span>
<span class="t" style="left:251.30px;top:176.00px;font-size:6.2px;line-height:6.2px;color:#20222b;transform:scaleX(0.9752);">Jet Black, Chestnut Brown, Light</span>
<span class="t" style="left:251.30px;top:183.00px;font-size:6.2px;line-height:6.2px;color:#20222b;transform:scaleX(0.9461);">Grey, Gunmetal Grey</span>
<div class="a" style="left:29.5px;top:196px;width:326.5px;height:0.9px;background:#e1ecf6;"></div>
<div class="a" style="left:29.5px;top:232.2px;width:326.5px;height:0.9px;background:#e1ecf6;"></div>
<div class="a" style="left:29.5px;top:269.6px;width:326.5px;height:0.9px;background:#e1ecf6;"></div>
<span class="t" style="left:29.40px;top:205.00px;font-size:7.9px;line-height:7.9px;color:#0d0f55;font-weight:700;transform:scaleX(1.0045);">Model</span>
<span class="t" style="left:29.40px;top:217.00px;font-size:8.2px;line-height:8.2px;color:#20222b;transform:scaleX(0.9502);">Altura XR</span>
<span class="t" style="left:140.70px;top:205.00px;font-size:7.9px;line-height:7.9px;color:#0d0f55;font-weight:700;">Manufacturer</span>
<span class="t" style="left:140.70px;top:217.00px;font-size:8.2px;line-height:8.2px;color:#20222b;transform:scaleX(0.9731);">Nexon Motors</span>
<span class="t" style="left:251.30px;top:205.00px;font-size:7.9px;line-height:7.9px;color:#0d0f55;font-weight:700;transform:scaleX(0.9708);">Year</span>
<span class="t" style="left:251.30px;top:219.00px;font-size:6.8px;line-height:6.8px;color:#20222b;transform:scaleX(0.9702);">YYYY</span>
<span class="t" style="left:29.40px;top:241.00px;font-size:7.9px;line-height:7.9px;color:#0d0f55;font-weight:700;transform:scaleX(0.9808);">Body Style</span>
<span class="t" style="left:29.40px;top:253.00px;font-size:8.2px;line-height:8.2px;color:#20222b;transform:scaleX(0.9716);">Compact SUV</span>
<span class="t" style="left:140.70px;top:241.00px;font-size:7.9px;line-height:7.9px;color:#0d0f55;font-weight:700;transform:scaleX(0.9859);">Seating Capacity</span>
<span class="t" style="left:140.70px;top:253.00px;font-size:8.2px;line-height:8.2px;color:#20222b;transform:scaleX(0.9741);">5 passengers</span>
<span class="t" style="left:251.30px;top:241.00px;font-size:7.9px;line-height:7.9px;color:#0d0f55;font-weight:700;transform:scaleX(0.9578);">Price Range</span>
<span class="t" style="left:251.30px;top:255.00px;font-size:6.9px;line-height:6.9px;color:#20222b;transform:scaleX(1.0389);">Starting at $32,000</span>
<div class="a" style="left:192.8px;top:284.3px;width:163.2px;height:15.3px;background:#d3e3f1;"></div>
<span class="t" style="left:228.80px;top:288.00px;font-size:8.7px;line-height:8.7px;color:#0d0f55;font-weight:700;transform:scaleX(0.8880);">Performance and Engine</span>
<span class="t" style="left:198.70px;top:306.00px;font-size:6.3px;line-height:6.3px;color:#1a2870;transform:scaleX(0.9572);-webkit-text-stroke:0.180px #1a2870;">Horsepower</span>
<span class="t" style="left:256.70px;top:306.00px;font-size:6px;line-height:6px;color:#20222b;transform:scaleX(0.9464);">250 hp @ 5,500 RPM</span>
<div class="a" style="left:196px;top:315.9px;width:160px;height:0.8px;background:#edf2f7;"></div>
<span class="t" style="left:198.70px;top:322.00px;font-size:6.3px;line-height:6.3px;color:#1a2870;transform:scaleX(0.9499);-webkit-text-stroke:0.180px #1a2870;">Torque</span>
<span class="t" style="left:256.70px;top:322.00px;font-size:6px;line-height:6px;color:#20222b;transform:scaleX(0.9445);">280 lb-ft @ 2,000-4,500 RPM</span>
<div class="a" style="left:196px;top:331.8px;width:160px;height:0.8px;background:#edf2f7;"></div>
<span class="t" style="left:198.70px;top:338.00px;font-size:6.3px;line-height:6.3px;color:#1a2870;transform:scaleX(0.9484);-webkit-text-stroke:0.180px #1a2870;">Transmission</span>
<span class="t" style="left:256.70px;top:338.00px;font-size:6px;line-height:6px;color:#20222b;transform:scaleX(0.9428);">8-speed automatic with manual</span>
<div class="a" style="left:196px;top:347.7px;width:160px;height:0.8px;background:#edf2f7;"></div>
<span class="t" style="left:198.70px;top:354.00px;font-size:6.3px;line-height:6.3px;color:#1a2870;transform:scaleX(0.9646);-webkit-text-stroke:0.180px #1a2870;">Drivetrain</span>
<span class="t" style="left:256.70px;top:354.00px;font-size:6px;line-height:6px;color:#20222b;transform:scaleX(0.9453);">All-Wheel Drive (AWD) standard</span>
<div class="a" style="left:196px;top:363.6px;width:160px;height:0.8px;background:#edf2f7;"></div>
<span class="t" style="left:198.70px;top:370.00px;font-size:6.3px;line-height:6.3px;color:#1a2870;transform:scaleX(0.9292);-webkit-text-stroke:0.180px #1a2870;">Fuel Economy</span>
<span class="t" style="left:256.70px;top:370.00px;font-size:6px;line-height:6px;color:#20222b;transform:scaleX(0.9454);">City: 24 MPG, Highway: 32 MPG</span>
<div class="a" style="left:196px;top:379.5px;width:160px;height:0.8px;background:#edf2f7;"></div>
<span class="t" style="left:198.70px;top:386.00px;font-size:6.3px;line-height:6.3px;color:#1a2870;transform:scaleX(0.9660);-webkit-text-stroke:0.180px #1a2870;">Towing Capacity</span>
<span class="t" style="left:256.70px;top:386.00px;font-size:6px;line-height:6px;color:#20222b;transform:scaleX(0.9483);">3,500 lbs</span>
<span class="t" style="left:168.30px;top:406.00px;font-size:9.3px;line-height:9.3px;color:#0d0f55;font-weight:700;transform:scaleX(0.9240);">Dimensions</span>
<div class="a" style="left:29.5px;top:421.8px;width:326.5px;height:0.9px;background:#5c69a3;"></div>
<span class="t" style="left:29.60px;top:431.00px;font-size:7.9px;line-height:7.9px;color:#0d0f55;font-weight:700;transform:scaleX(0.9629);">Overall Length</span>
<span class="t" style="left:29.60px;top:443.00px;font-size:8.2px;line-height:8.2px;color:#20222b;transform:scaleX(0.9442);">185 inches</span>
<span class="t" style="left:29.60px;top:455.00px;font-size:7.9px;line-height:7.9px;color:#0d0f55;font-weight:700;">Wheelbase</span>
<span class="t" style="left:29.60px;top:468.00px;font-size:8.2px;line-height:8.2px;color:#20222b;transform:scaleX(0.9333);">110 inches</span>
<span class="t" style="left:140.40px;top:431.00px;font-size:7.9px;line-height:7.9px;color:#0d0f55;font-weight:700;transform:scaleX(0.9843);">Overall Width</span>
<span class="t" style="left:140.40px;top:443.00px;font-size:8.2px;line-height:8.2px;color:#20222b;transform:scaleX(0.9668);">74 inches</span>
<span class="t" style="left:140.40px;top:455.00px;font-size:7.9px;line-height:7.9px;color:#0d0f55;font-weight:700;transform:scaleX(0.9721);">Ground Clearance</span>
<span class="t" style="left:140.40px;top:468.00px;font-size:8.2px;line-height:8.2px;color:#20222b;transform:scaleX(0.9751);">8.5 inches</span>
<span class="t" style="left:251.20px;top:431.00px;font-size:7.9px;line-height:7.9px;color:#0d0f55;font-weight:700;transform:scaleX(0.9776);">Overall Height</span>
<span class="t" style="left:251.20px;top:445.00px;font-size:6.9px;line-height:6.9px;color:#20222b;transform:scaleX(1.0203);">66 inches</span>
<span class="t" style="left:251.20px;top:455.00px;font-size:7.9px;line-height:7.9px;color:#0d0f55;font-weight:700;transform:scaleX(0.9794);">Curb Weight</span>
<span class="t" style="left:251.20px;top:470.00px;font-size:6.9px;line-height:6.9px;color:#20222b;transform:scaleX(1.0297);">3,800 lbs</span>
<div class="a" style="left:0.2px;top:496.7px;width:386px;height:3.8px;background:#2454e0;"></div>
<svg style="left:9px;top:104px" width="250" height="100" viewBox="0 0 1200 480" fill="none" stroke="#2b3a7d" stroke-width="4.400" stroke-linejoin="round" stroke-linecap="round"><path d="M181 338L102 318C97 300 96 270 100 250C103 232 110 222 120 214C180 190 270 172 350 160C410 120 470 92 516 80C590 70 690 70 745 75C800 82 850 100 906 125C950 142 1000 152 1048 157C1064 168 1070 200 1075 231C1092 245 1094 285 1084 298L1048 316L952 328A87 87 0 1 0 779 310L350 310A86 86 0 1 0 181 338Z" fill="#fff"/><path d="M382 173Q450 124 521 92L615 89L618 166Z" fill="#cfe3f3"/><path d="M623 89L777 92L821 160L620 166Z" fill="#cfe3f3"/><path d="M792 100L865 140L853 157L826 157Z" fill="#cfe3f3"/><g stroke="none" fill="#fff"><path d="M500 106L532 94L474 168L440 169Z"/><path d="M588 91L606 90L560 167L546 167Z"/><path d="M712 92L760 92L716 163L668 164Z"/></g><path d="M382 173Q450 124 521 92L615 89L618 166Z"/><path d="M623 89L777 92L821 160L620 166Z"/><path d="M792 100L865 140L853 157L826 157Z"/><path d="M382 174C362 200 355 240 355 285L361 308"/><path d="M618 166C614 220 606 270 597 308"/><path d="M821 162L833 175C826 205 800 260 747 306"/><path d="M548 200h42M780 198h32"/><rect x="350" y="309" width="430" height="22" fill="#cfe3f3"/><path d="M114 228L190 208C186 222 180 232 172 238L120 244Z" fill="#cfe3f3"/><rect x="118" y="283" width="22" height="28" rx="6"/><path d="M1058 169C1030 176 1030 210 1066 213Z" fill="#cfe3f3"/><path d="M945 238L1075 231M989 258L1087 252M1037 275L1086 272"/><circle cx="263" cy="310" r="73" fill="#fff"/><circle cx="263" cy="310" r="54" fill="#cfe3f3"/><polygon points="254.5,260.7 271.5,260.7 273.0,296.2 307.3,286.7 312.5,302.8 279.2,315.3 298.8,344.9 285.1,354.8 263.0,327.0 240.9,354.8 227.2,344.9 246.8,315.3 213.5,302.8 218.7,286.7 253.0,296.2" fill="#fff"/><circle cx="263" cy="310" r="73"/><circle cx="263" cy="310" r="54"/><circle cx="263" cy="310" r="7" fill="#fff"/><circle cx="865" cy="310" r="73" fill="#fff"/><circle cx="865" cy="310" r="54" fill="#cfe3f3"/><polygon points="856.5,260.7 873.5,260.7 875.0,296.2 909.3,286.7 914.5,302.8 881.2,315.3 900.8,344.9 887.1,354.8 865.0,327.0 842.9,354.8 829.2,344.9 848.8,315.3 815.5,302.8 820.7,286.7 855.0,296.2" fill="#fff"/><circle cx="865" cy="310" r="73"/><circle cx="865" cy="310" r="54"/><circle cx="865" cy="310" r="7" fill="#fff"/></svg>
<svg style="left:9px;top:279px" width="250" height="120" viewBox="0 0 1200 576" fill="none" stroke="#2b3a7d" stroke-width="5" stroke-linejoin="round" stroke-linecap="round"><path d="M178 218L232 104C240 90 262 84 290 84H575C605 84 625 90 634 104L690 218C715 240 740 270 752 300C760 330 762 360 760 400L757 482C756 498 752 506 744 506H598L582 490H285L270 506H118C110 506 106 498 105 482L101 400C99 360 100 330 108 300C120 270 150 240 178 218Z" fill="#fff"/><path d="M188 218L242 112C248 100 262 96 282 96H584C604 96 616 100 622 112L676 218Z" fill="#cfe3f3"/><path d="M312 136H556"/><path d="M314 136L300 160M554 136L568 160" stroke-width="4"/><rect x="290" y="148" width="70" height="58" rx="14" fill="#cfe3f3"/><rect x="508" y="148" width="70" height="58" rx="14" fill="#cfe3f3"/><path d="M254 218C260 208 270 205 285 205H365C380 205 388 210 392 218M476 218C480 210 488 205 503 205H583C598 205 608 208 614 218"/><path d="M435 100v18"/><rect x="398" y="118" width="74" height="20" rx="10" fill="#fff"/><path d="M160 240L150 226H125C112 226 106 218 106 208C106 196 114 190 126 190H150C162 190 168 198 168 210Z" fill="#fff"/><path d="M704 240L714 226H739C752 226 758 218 758 208C758 196 750 190 738 190H714C702 190 696 198 696 210Z" fill="#fff"/><path d="M110 300C160 306 210 312 262 318L276 346C250 360 215 362 190 358C160 352 130 344 108 334Z" fill="#fff"/><path d="M754 300C704 306 654 312 602 318L588 346C614 360 649 362 674 358C704 352 734 344 756 334Z" fill="#fff"/><path d="M134 304V338" stroke-width="4"/><path d="M730 304V338" stroke-width="4"/><path d="M262 318H602L588 346C575 358 565 362 550 362H314C299 362 289 358 276 346Z" fill="#cfe3f3"/><path d="M312 328H552M322 340H400M462 340H544M332 352H532" stroke-width="4"/><circle cx="230" cy="338" r="25" fill="#fff"/><circle cx="632" cy="338" r="25" fill="#fff"/><circle cx="431" cy="340" r="22" fill="#fff"/><path d="M136 424L260 432M726 424L602 432"/><path d="M142 440H238L222 470H158Z" fill="#cfe3f3"/><path d="M722 440H626L642 470H706Z" fill="#cfe3f3"/><path d="M300 432H566L582 478H284Z" fill="#cfe3f3"/><path d="M356 441H510M304 453H560M300 465H564" stroke-width="4"/></svg></div>
<div class="a" style="left:1063.600px;top:335.700px;width:386px;height:494px;transform-origin:0 0;transform:scale(0.3264);overflow:hidden;text-rendering:geometricPrecision"><span class="t" style="left:29.70px;top:30.00px;font-size:22.7px;line-height:22.7px;color:#0d0f55;font-weight:700;transform:scaleX(1.0213);">Car Spec Sheet</span>
<div class="a" style="left:29.5px;top:60.5px;width:92.5px;height:19.2px;background:#2b5ae8;"></div>
<span class="t" style="left:37.20px;top:66.00px;font-size:8.3px;line-height:8.3px;color:#ffffff;font-weight:700;letter-spacing:0.6px;transform:scaleX(1.0160);">ALTURA XR 2024</span>
<span class="t" style="left:302.80px;top:29.00px;font-size:12.4px;line-height:12.4px;color:#0d0f55;transform:scaleX(1.1898);">Your</span>
<span class="t" style="left:302.30px;top:41.00px;font-size:12px;line-height:12px;color:#0d0f55;font-weight:700;transform:scaleX(1.3015);">LOGO</span>
<div class="a" style="left:337.5px;top:30px;width:11px;height:10.5px;background:#0d0f55;border-radius:3px;"></div>
<span class="t" style="left:156.00px;top:91.00px;font-size:9.3px;line-height:9.3px;color:#0d0f55;font-weight:700;">Interior Features</span>
<div class="a" style="left:29.5px;top:106.9px;width:326.5px;height:0.9px;background:#5c69a3;"></div>
<span class="t" style="left:32.20px;top:269.00px;font-size:6.3px;line-height:6.3px;color:#1f2f78;">Upholstery</span>
<span class="t" style="left:149.90px;top:269.00px;font-size:6px;line-height:6px;color:#20222b;">Premium leather seating surfaces</span>
<div class="a" style="left:29.5px;top:279px;width:326.5px;height:0.8px;background:#f0f4f8;"></div>
<span class="t" style="left:32.20px;top:285.00px;font-size:6.3px;line-height:6.3px;color:#1f2f78;">Infotainment System</span>
<span class="t" style="left:149.90px;top:285.00px;font-size:6px;line-height:6px;color:#20222b;">12.3-inch touchscreen with navigation</span>
<div class="a" style="left:29.5px;top:294.6px;width:326.5px;height:0.8px;background:#f0f4f8;"></div>
<span class="t" style="left:32.20px;top:300.00px;font-size:6.3px;line-height:6.3px;color:#1f2f78;">Apple CarPlay and Android Auto</span>
<span class="t" style="left:149.90px;top:300.00px;font-size:6px;line-height:6px;color:#20222b;">Standard</span>
<div class="a" style="left:29.5px;top:310.2px;width:326.5px;height:0.8px;background:#f0f4f8;"></div>
<span class="t" style="left:32.20px;top:316.00px;font-size:6.3px;line-height:6.3px;color:#1f2f78;">Audio System</span>
<span class="t" style="left:149.90px;top:316.00px;font-size:6px;line-height:6px;color:#20222b;">12-speaker premium sound system by XYZ Audio</span>
<div class="a" style="left:29.5px;top:325.8px;width:326.5px;height:0.8px;background:#f0f4f8;"></div>
<span class="t" style="left:32.20px;top:331.00px;font-size:6.3px;line-height:6.3px;color:#1f2f78;">Climate Control</span>
<span class="t" style="left:149.90px;top:331.00px;font-size:6px;line-height:6px;color:#20222b;">Dual-zone automatic climate control</span>
<div class="a" style="left:29.5px;top:341.4px;width:326.5px;height:0.8px;background:#f0f4f8;"></div>
<span class="t" style="left:32.20px;top:347.00px;font-size:6.3px;line-height:6.3px;color:#1f2f78;">Wireless Charging</span>
<span class="t" style="left:149.90px;top:347.00px;font-size:6px;line-height:6px;color:#20222b;">Standard</span>
<div class="a" style="left:29.5px;top:357px;width:326.5px;height:0.8px;background:#f0f4f8;"></div>
<span class="t" style="left:32.20px;top:363.00px;font-size:6.3px;line-height:6.3px;color:#1f2f78;">USB Ports</span>
<span class="t" style="left:149.90px;top:363.00px;font-size:6px;line-height:6px;color:#20222b;">Front and rear, 4 total</span>
<div class="a" style="left:29.5px;top:372.6px;width:326.5px;height:0.8px;background:#f0f4f8;"></div>
<span class="t" style="left:32.20px;top:378.00px;font-size:6.3px;line-height:6.3px;color:#1f2f78;">Heated Seats</span>
<span class="t" style="left:149.90px;top:378.00px;font-size:6px;line-height:6px;color:#20222b;">Heated front seats, optional rear heated seats</span>
<div class="a" style="left:29.5px;top:388.2px;width:326.5px;height:0.8px;background:#f0f4f8;"></div>
<span class="t" style="left:32.20px;top:394.00px;font-size:6.3px;line-height:6.3px;color:#1f2f78;">Panoramic Sunroof</span>
<span class="t" style="left:149.90px;top:394.00px;font-size:6px;line-height:6px;color:#20222b;">Standard on Premium trim</span>
<span class="t" style="left:175.00px;top:425.00px;font-size:9.3px;line-height:9.3px;color:#0d0f55;font-weight:700;transform:scaleX(0.9011);">Warranty</span>
<div class="a" style="left:29.5px;top:440.6px;width:326.5px;height:0.9px;background:#5c69a3;"></div>
<span class="t" style="left:29.60px;top:448.00px;font-size:7.9px;line-height:7.9px;color:#0d0f55;font-weight:700;">Basic Warranty</span>
<span class="t" style="left:29.60px;top:462.00px;font-size:6.9px;line-height:6.9px;color:#20222b;">X years/XX,000 miles</span>
<span class="t" style="left:140.40px;top:448.00px;font-size:7.9px;line-height:7.9px;color:#0d0f55;font-weight:700;">Powertrain Warranty</span>
<span class="t" style="left:140.40px;top:462.00px;font-size:6.9px;line-height:6.9px;color:#20222b;">X years/XX,000 miles</span>
<span class="t" style="left:251.20px;top:448.00px;font-size:7.9px;line-height:7.9px;color:#0d0f55;font-weight:700;">Electric Vehicle Battery</span>
<span class="t" style="left:251.20px;top:462.00px;font-size:6.9px;line-height:6.9px;color:#20222b;">X years/XX,000 miles</span>
<svg style="left:110px;top:215px" width="160" height="30" viewBox="0 0 160 30" fill="#fff" stroke="#2b3a7d" stroke-width="1.100"><rect x="9" y="2" width="22" height="24" rx="4"/><rect x="123" y="2" width="22" height="24" rx="4"/><path d="M12 8h16M12 14h16M12 20h16M126 8h16M126 14h16M126 20h16" stroke-width="0.700"/></svg>
<svg style="left:89.5px;top:113px" width="277" height="133" viewBox="0 0 1200 576" fill="none" stroke="#2b3a7d" stroke-width="5" stroke-linejoin="round" stroke-linecap="round"><path d="M178 218L232 104C240 90 262 84 290 84H575C605 84 625 90 634 104L690 218C715 240 740 270 752 300C760 330 762 360 760 400L757 482C756 498 752 506 744 506H598L582 490H285L270 506H118C110 506 106 498 105 482L101 400C99 360 100 330 108 300C120 270 150 240 178 218Z" fill="#fff"/><path d="M188 218L242 112C248 100 262 96 282 96H584C604 96 616 100 622 112L676 218Z" fill="#cfe3f3"/><path d="M312 136H556"/><path d="M314 136L300 160M554 136L568 160" stroke-width="4"/><rect x="290" y="148" width="70" height="58" rx="14" fill="#cfe3f3"/><rect x="508" y="148" width="70" height="58" rx="14" fill="#cfe3f3"/><path d="M254 218C260 208 270 205 285 205H365C380 205 388 210 392 218M476 218C480 210 488 205 503 205H583C598 205 608 208 614 218"/><path d="M435 100v18"/><rect x="398" y="118" width="74" height="20" rx="10" fill="#fff"/><path d="M160 240L150 226H125C112 226 106 218 106 208C106 196 114 190 126 190H150C162 190 168 198 168 210Z" fill="#fff"/><path d="M704 240L714 226H739C752 226 758 218 758 208C758 196 750 190 738 190H714C702 190 696 198 696 210Z" fill="#fff"/><path d="M110 300C160 306 210 312 262 318L276 346C250 360 215 362 190 358C160 352 130 344 108 334Z" fill="#fff"/><path d="M754 300C704 306 654 312 602 318L588 346C614 360 649 362 674 358C704 352 734 344 756 334Z" fill="#fff"/><path d="M134 304V338" stroke-width="4"/><path d="M730 304V338" stroke-width="4"/><path d="M262 318H602L588 346C575 358 565 362 550 362H314C299 362 289 358 276 346Z" fill="#cfe3f3"/><path d="M312 328H552M322 340H400M462 340H544M332 352H532" stroke-width="4"/><circle cx="230" cy="338" r="25" fill="#fff"/><circle cx="632" cy="338" r="25" fill="#fff"/><circle cx="431" cy="340" r="22" fill="#fff"/><path d="M136 424L260 432M726 424L602 432"/><path d="M142 440H238L222 470H158Z" fill="#cfe3f3"/><path d="M722 440H626L642 470H706Z" fill="#cfe3f3"/><path d="M300 432H566L582 478H284Z" fill="#cfe3f3"/><path d="M356 441H510M304 453H560M300 465H564" stroke-width="4"/></svg>
<div class="a" style="left:85px;top:159px;width:26px;height:0.9px;background:#7f8bb8;"></div>
<div class="a" style="left:81px;top:209px;width:28px;height:0.9px;background:#7f8bb8;"></div>
<div class="a" style="left:89px;top:227px;width:24px;height:0.9px;background:#7f8bb8;"></div>
<div class="a" style="left:95px;top:243px;width:26px;height:0.9px;background:#7f8bb8;"></div>
<div class="a" style="left:265px;top:167px;width:30px;height:0.9px;background:#7f8bb8;"></div>
<div class="a" style="left:261px;top:205px;width:28px;height:0.9px;background:#7f8bb8;"></div>
<div class="a" style="left:257px;top:231px;width:24px;height:0.9px;background:#7f8bb8;"></div></div>
<div class="a" style="left:799.500px;top:555.300px;width:165.500px;height:32.400px;border-radius:16.200px;background:rgba(255,255,255,.55);box-shadow:0 1px 4px rgba(0,0,0,.10)"></div>
<div class="a" style="left:812.6px;top:570.8px;width:10px;height:1.3px;background:#2b8ef5;"></div>
<div class="a" style="left:835.1px;top:570.9px;width:80.8px;height:1px;background:#8a8d92;"></div>
<div class="a" style="left:817.3px;top:566.2px;width:10.4px;height:10.4px;background:#2b8ef5;border-radius:6px;"></div>
<div class="a" style="left:829.5px;top:569.4px;width:4px;height:4px;background:#5f6368;border-radius:2px;"></div>
<span class="t" style="left:933.30px;top:566.00px;font-size:12.8px;line-height:12.8px;color:#1a1f27;font-weight:700;transform:scaleX(0.7688);">57%</span>
<div class="a" style="left:977.500px;top:553.500px;width:37px;height:37px;border-radius:50%;background:#2e3d52;border:2px solid #a9c9ea"></div>
<span class="t" style="left:991.50px;top:565.00px;font-size:18.5px;line-height:18.5px;color:#ffffff;font-weight:700;transform:scaleX(0.7956);">?</span>
<div class="a" style="left:0px;top:607px;width:1200px;height:3px;background:#2a2b2e;"></div>
</div>
</body></html>
